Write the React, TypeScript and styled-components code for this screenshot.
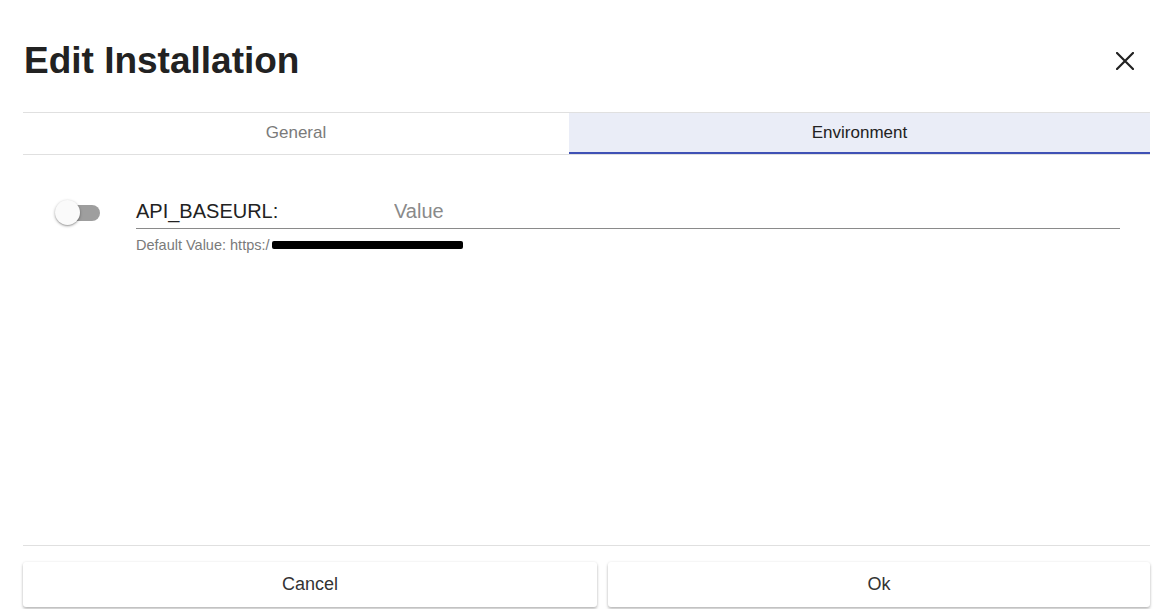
import { createGlobalStyle, styled } from 'styled-components'

const Global = createGlobalStyle`
  html, body {
    margin: 0;
    padding: 0;
    background: #fff;
    font-family: "Liberation Sans", Arial, sans-serif;
  }
`

const Dialog = styled.div`
  display: flex;
  flex-direction: column;
  height: 609px;
  padding: 0 23px;
  box-sizing: border-box;
`

const Header = styled.div`
  display: flex;
  align-items: center;
  justify-content: space-between;
  height: 112px;
  padding: 0 10px 0 1px;
  box-sizing: border-box;
`

const Title = styled.h1`
  margin: 0;
  padding-top: 10px;
  font-size: 37px;
  font-weight: 700;
  color: #222;
`

const CloseButton = styled.button`
  display: flex;
  align-items: center;
  justify-content: center;
  width: 30px;
  height: 30px;
  margin-top: 10px;
  padding: 0;
  background: none;
  border: none;
  cursor: pointer;
`

const Tabs = styled.div`
  display: grid;
  grid-template-columns: 546px 1fr;
  border-top: 1px solid #e0e0e0;
  border-bottom: 1px solid #e0e0e0;
`

const Tab = styled.button<{ $active?: boolean }>`
  height: 41px;
  padding: 0;
  border: none;
  border-bottom: 2px solid ${(p) => (p.$active ? '#3f51b5' : 'transparent')};
  background: ${(p) => (p.$active ? '#eaedf7' : '#fff')};
  color: ${(p) => (p.$active ? '#222' : '#7a7a7a')};
  font-family: inherit;
  font-size: 17px;
  cursor: pointer;
`

const Body = styled.div`
  flex: 1;
  padding: 42px 30px 0 32px;
`

const VarRow = styled.div`
  display: flex;
  align-items: flex-start;
  gap: 36px;
`

const Switch = styled.div`
  position: relative;
  flex-shrink: 0;
  width: 45px;
  height: 25px;
  margin-top: 3px;
`

const Track = styled.div`
  position: absolute;
  left: 5px;
  top: 5px;
  width: 40px;
  height: 16px;
  border-radius: 8px;
  background: #9e9e9e;
`

const Thumb = styled.div`
  position: absolute;
  left: 0;
  top: 0;
  width: 25px;
  height: 25px;
  border-radius: 50%;
  background: #fafafa;
  box-shadow: 0 1px 3px rgba(0, 0, 0, 0.35), 0 1px 1px rgba(0, 0, 0, 0.12);
`

const FieldColumn = styled.div`
  flex: 1;
  display: flex;
  flex-direction: column;
`

const Field = styled.div`
  display: flex;
  align-items: center;
  height: 32px;
  padding-bottom: 3px;
  box-sizing: border-box;
  border-bottom: 1px solid #8a8a8a;
`

const Label = styled.div`
  width: 258px;
  font-size: 20px;
  color: #222;
`

const Input = styled.input`
  flex: 1;
  border: none;
  outline: none;
  padding: 0;
  font-family: inherit;
  font-size: 20px;
  color: #222;
  &::placeholder {
    color: #8a8a8a;
  }
`

const Hint = styled.div`
  display: flex;
  align-items: center;
  margin-top: 8px;
  font-size: 14.5px;
  color: #7a7a7a;
`

const Redacted = styled.span`
  display: inline-block;
  width: 191px;
  height: 8px;
  margin-left: 2px;
  background: #000;
  border-radius: 2px;
`

const Footer = styled.div`
  border-top: 1px solid #e0e0e0;
  margin-bottom: 2px;
  padding-top: 16px;
  display: grid;
  grid-template-columns: 574px 1fr;
  gap: 11px;
`

const Button = styled.button`
  height: 45px;
  border: none;
  border-radius: 3px;
  background: #fff;
  color: #333;
  font-family: inherit;
  font-size: 18px;
  box-shadow: 0 2px 3px rgba(0, 0, 0, 0.25), 0 0 3px rgba(0, 0, 0, 0.08);
  cursor: pointer;
`

export default function App() {
  return (
    <>
      <Global />
      <Dialog>
        <Header>
          <Title>Edit Installation</Title>
          <CloseButton aria-label="Close">
            <svg width="18" height="18" viewBox="0 0 18 18">
              <path
                d="M1 1 L17 17 M17 1 L1 17"
                stroke="#222"
                strokeWidth="2.2"
                strokeLinecap="square"
              />
            </svg>
          </CloseButton>
        </Header>
        <Tabs>
          <Tab>General</Tab>
          <Tab $active>Environment</Tab>
        </Tabs>
        <Body>
          <VarRow>
            <Switch>
              <Track />
              <Thumb />
            </Switch>
            <FieldColumn>
              <Field>
                <Label>API_BASEURL:</Label>
                <Input placeholder="Value" />
              </Field>
              <Hint>
                Default Value: https:/
                <Redacted />
              </Hint>
            </FieldColumn>
          </VarRow>
        </Body>
        <Footer>
          <Button>Cancel</Button>
          <Button>Ok</Button>
        </Footer>
      </Dialog>
    </>
  )
}
